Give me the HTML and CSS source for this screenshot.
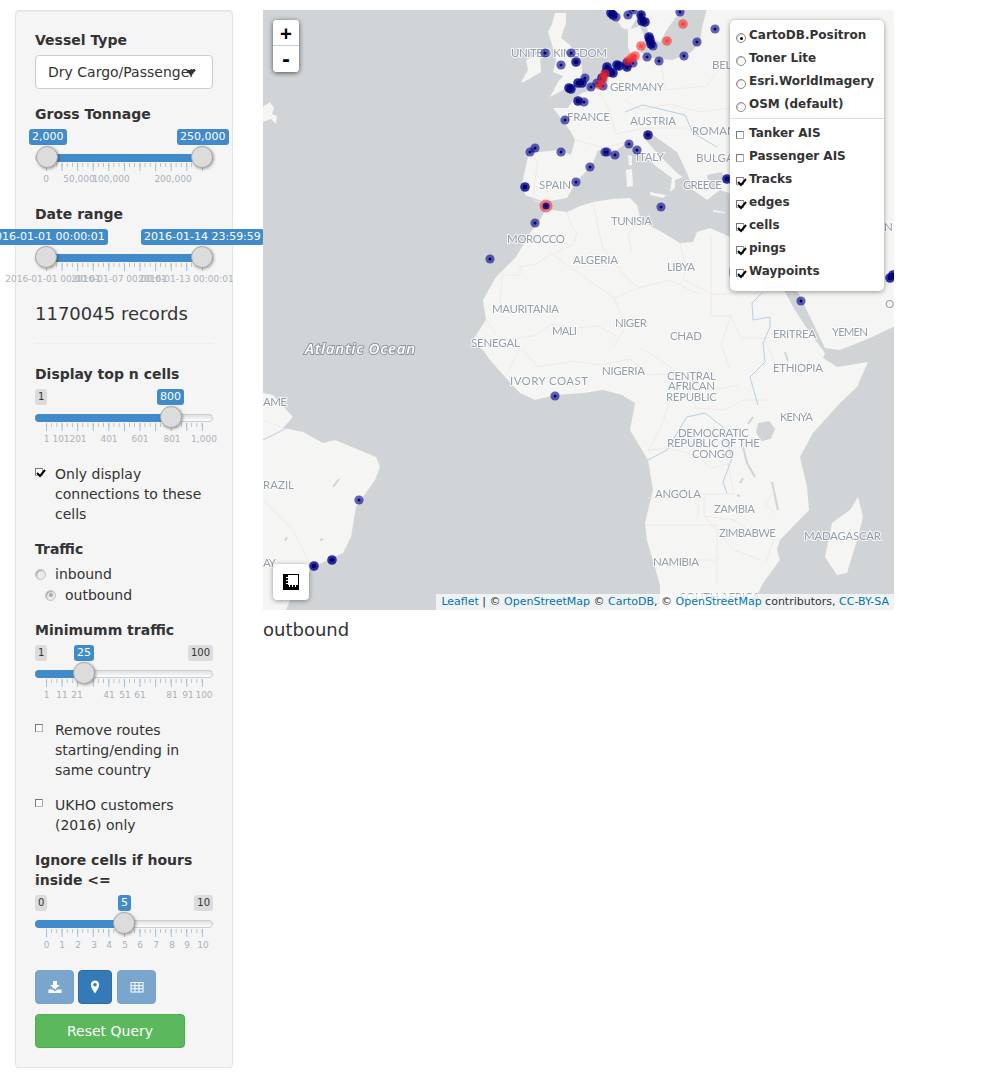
FILE: index.html
```html
<!DOCTYPE html>
<html lang="en">
<head>
<meta charset="utf-8">
<title>Vessel traffic</title>
<link rel="stylesheet" href="styles.css">
</head>
<body>
<div class="page">
<aside class="panel">
  <div class="label">Vessel Type</div>
  <div class="select"><span class="select-text">Dry Cargo/Passenger</span><span class="caret"></span></div>

  <div class="label">Gross Tonnage</div>
  <div class="slider">
    <span class="badge blue" style="left:-6px">2,000</span>
    <span class="badge blue" style="left:142px">250,000</span>
    <div class="track"></div>
    <div class="fill" style="left:12px;width:155px"></div>
    <div class="ticks"></div>
    <span class="handle" style="left:1px"></span>
    <span class="handle" style="left:156px"></span>
    <span class="tick-label" style="left:11px">0</span>
    <span class="tick-label" style="left:44px">50,000</span>
    <span class="tick-label" style="left:76px">100,000</span>
    <span class="tick-label" style="left:138px">200,000</span>
  </div>

  <div class="label">Date range</div>
  <div class="slider">
    <span class="badge blue badge-clip" style="left:-50px">2016-01-01 00:00:01</span>
    <span class="badge blue" style="left:106px">2016-01-14 23:59:59</span>
    <div class="track"></div>
    <div class="fill" style="left:11px;width:156px"></div>
    <div class="ticks"></div>
    <span class="handle" style="left:0"></span>
    <span class="handle" style="left:156px"></span>
    <span class="tick-label" style="left:18px">2016-01-01 00:00:01</span>
    <span class="tick-label" style="left:84px">2016-01-07 00:00:01</span>
    <span class="tick-label" style="left:151px">2016-01-13 00:00:01</span>
  </div>

  <div class="records">1170045 records</div>
  <hr class="rule">

  <div class="label">Display top n cells</div>
  <div class="slider">
    <span class="badge grey" style="left:0">1</span>
    <span class="badge blue" style="left:122px">800</span>
    <div class="track"></div>
    <div class="fill" style="left:0;width:136px"></div>
    <div class="ticks"></div>
    <span class="handle" style="left:125px"></span>
    <span class="tick-label" style="left:11.5px">1</span>
    <span class="tick-label" style="left:26px">101</span>
    <span class="tick-label" style="left:43px">201</span>
    <span class="tick-label" style="left:74px">401</span>
    <span class="tick-label" style="left:105px">601</span>
    <span class="tick-label" style="left:137px">801</span>
    <span class="tick-label" style="left:169px">1,000</span>
  </div>

  <div class="check-row">
    <span class="cb"><svg class="tick-mark" viewBox="0 0 10 9"><path d="M1 4l3 3 5-6" /></svg></span>
    <span>Only display connections to these cells</span>
  </div>

  <div class="label">Traffic</div>
  <div class="radio-row"><span class="rb"></span><span>inbound</span></div>
  <div class="radio-row second"><span class="rb on"></span><span>outbound</span></div>

  <div class="label">Minimumm traffic</div>
  <div class="slider">
    <span class="badge grey" style="left:0">1</span>
    <span class="badge blue" style="left:39px">25</span>
    <span class="badge grey" style="right:0">100</span>
    <div class="track"></div>
    <div class="fill" style="left:0;width:49px"></div>
    <div class="ticks"></div>
    <span class="handle" style="left:38px"></span>
    <span class="tick-label" style="left:11.5px">1</span>
    <span class="tick-label" style="left:27px">11</span>
    <span class="tick-label" style="left:42px">21</span>
    <span class="tick-label" style="left:74px">41</span>
    <span class="tick-label" style="left:90px">51</span>
    <span class="tick-label" style="left:105px">61</span>
    <span class="tick-label" style="left:137px">81</span>
    <span class="tick-label" style="left:153px">91</span>
    <span class="tick-label" style="left:169px">100</span>
  </div>

  <div class="check-row">
    <span class="cb"></span>
    <span>Remove routes starting/ending in same country</span>
  </div>
  <div class="check-row">
    <span class="cb"></span>
    <span>UKHO customers (2016) only</span>
  </div>

  <div class="label">Ignore cells if hours inside &lt;=</div>
  <div class="slider">
    <span class="badge grey" style="left:0">0</span>
    <span class="badge blue" style="left:83px">5</span>
    <span class="badge grey" style="right:0">10</span>
    <div class="track"></div>
    <div class="fill" style="left:0;width:89px"></div>
    <div class="ticks"></div>
    <span class="handle" style="left:78px"></span>
    <span class="tick-label" style="left:11.5px">0</span>
    <span class="tick-label" style="left:27px">1</span>
    <span class="tick-label" style="left:43px">2</span>
    <span class="tick-label" style="left:59px">3</span>
    <span class="tick-label" style="left:74px">4</span>
    <span class="tick-label" style="left:90px">5</span>
    <span class="tick-label" style="left:105px">6</span>
    <span class="tick-label" style="left:121px">7</span>
    <span class="tick-label" style="left:137px">8</span>
    <span class="tick-label" style="left:152px">9</span>
    <span class="tick-label" style="left:168px">10</span>
  </div>

  <div class="btn-row">
    <button class="icon-btn faded wide" aria-label="download">
      <svg class="btn-icon" viewBox="0 0 14 14"><path d="M5 1h4v4h3L7 9.500 2 5h3z"/><path d="M.5 9.500h4L7 11.500l2.500-2h4V13H.5z"/></svg>
    </button>
    <button class="icon-btn" aria-label="map">
      <svg class="btn-icon" viewBox="0 0 14 14"><path fill-rule="evenodd" d="M7 .5a4.200 4.200 0 0 1 4.200 4.200C11.200 7.500 8.500 11 7 13.500 5.500 11 2.800 7.500 2.800 4.700A4.200 4.200 0 0 1 7 .5zM7 2.900a1.800 1.800 0 1 0 0 3.600 1.800 1.800 0 0 0 0-3.600z"/></svg>
    </button>
    <button class="icon-btn faded wide last" aria-label="table">
      <svg class="btn-icon" viewBox="0 0 14 14"><path fill-rule="evenodd" d="M.5 2h13v10.500H.5zM1.500 3v2.200h3V3zm4 0v2.200h3V3zm4 0v2.200h3V3zM1.500 6.200v2.100h3V6.200zm4 0v2.100h3V6.200zm4 0v2.100h3V6.200zM1.500 9.300v2.200h3V9.300zm4 0v2.200h3V9.300zm4 0v2.200h3V9.300z"/></svg>
    </button>
  </div>
  <button class="reset">Reset Query</button>
</aside>

<main class="main">
  <div class="map">
    <svg class="base" viewBox="263 10 631 600" aria-hidden="true">
      <defs>
        <g id="lt"><circle r="4.600" class="d-lt"/><circle r="1.500" class="d-core"/></g>
        <g id="dk"><circle r="4.800" class="d-dk"/><circle r="2.400" class="d-core"/></g>
        <g id="rd"><circle r="4.800" class="d-rd"/><circle r="2" class="d-rd-core"/></g>
        <g id="rb"><circle r="6.500" class="d-rd"/><circle r="3.500" class="d-dk"/><circle r="1.600" class="d-core"/></g>
      </defs>
      <rect x="263" y="10" width="631" height="600" class="sea"/>
      <g class="soft">
      <!-- Africa -->
      <path class="land" d="M546 209L567 212 580 206 593 202 612 199 630 198 637 205 640 217 650 226 660 231 680 243 693 242 697 232 710 228 730 237 750 240 770 236 785 260 784 290 793 307 810 333 825 353 823 358 837 367 868 362 857 387 840 403 813 433 800 457 807 487 809 510 780 540 777 550 780 560 763 583 757 595 750 612 660 612 660 585 647 540 645 523 653 490 648 460 630 430 635 403 622 395 603 390 583 393 555 395 535 400 520 393 505 377 490 360 483 350 471 343 486 320 483 300 496 277 516 257 530 233 540 220z"/>
      <!-- Europe and Asia -->
      <path class="land" d="M529 153L560 150 571 155 575 140 571 132 553 108 568 108 573 100 582 93 597 88 607 78 612 68 627 63 634 60 628 48 628 30 640 26 645 38 640 52 652 58 672 60 690 53 700 43 702 28 707 8 900 8 900 326 893 327 870 338 840 350 825 348 797 290 770 236 745 205 735 195 720 190 707 200 693 190 687 173 677 152 653 135 643 137 657 153 677 173 683 177 675 180 675 188 670 192 672 178 657 167 643 155 637 150 628 142 613 153 598 150 592 165 575 183 567 198 545 202 525 195 522 183z"/>
      <!-- Scandinavia -->
      <path class="land" d="M610 8L622 28 630 30 638 16 645 22 650 38 660 42 668 28 680 12 690 8z"/>
      <!-- Britain and Ireland -->
      <path class="land" d="M555 13L566 13 566 23 561 38 570 45 578 60 582 66 582 78 567 88 550 97 558 82 563 76 553 72 556 60 553 48 548 32 552 24z"/>
      <path class="land" d="M526 60L540 53 541 72 524 82 521 82 528 70z"/>
      <path class="land" d="M263 107L270 102 274 108 272 114 277 116 276 124 271 119 263 122z"/>
      <path class="land" d="M858 497L863 517 858 537 847 573 837 575 825 557 832 523 850 510z"/>
      <path class="land" d="M263 393L273 395 293 417 283 428 303 432 323 443 335 440 376 457 380 467 375 480 356 507 351 537 343 553 313 567 293 593 286 610 263 610z"/>
      <!-- islands and inner seas -->
      <path class="land" d="M628 155l4 1 0 9-3 1zM626 170l6-1 1 17-6 1zM650 192l16 3-3 3-13-3zM713 210l12 2 0 1-12-1z"/>
      <path class="sea" d="M707 175l15-3 4 10-8 2-3 6-6-4z"/>
      <g class="lake">
        <path d="M759 424l10-2 5 7-4 9-8 2-5-8z"/>
        <path d="M743 447l4 16 8 14" fill="none"/>
        <path d="M772 482l3 14 3 14" fill="none"/>
        <path d="M743 478l-3 5M737 495l3 1M785 352l3 9M753 417l-5 7" fill="none"/>
        <path d="M339 479l-6 8M320 540l3-1M287 537l-2 4" fill="none"/>
      </g>
      <g class="border">
        <path d="M567 212l4 14 6 6-3 12-22 10-16 10-16 3 0 8-18 0-2 35"/>
        <path d="M552 254l62 44 24-10 32-8 28 14M614 298l12 28-12 20"/>
        <path d="M593 202l6 30 4 16 18 24 17 16M640 217l-12 18 4 16"/>
        <path d="M680 243l6 26-3 10 28 15 55 0M711 294l0-57"/>
        <path d="M711 294l0 22 20 0 10 22 23 0 12 28 26 6M731 316l-10 28 8 24"/>
        <path d="M486 320l14 20 34-4 18-12 24 4 22-2 18 10"/>
        <path d="M505 377l15-30 18 20 36-6 26 4 30-6 18 16 30-2 30 18 30-6"/>
        <path d="M640 348l18 10 26 20 12 30 28 2 20-10 26 0M670 400l-10 30-12 20 20-2 30 8 12 12 18-4 6 30-36 0 0 24"/>
        <path d="M648 498l56 0 0 18 30 4 14 10 18 0 8 10-8 22M645 525l72 0 0 60M660 560l56 0M775 490l-10 14 10 10M704 516l30 34 26 10"/>
        <path d="M625 100l15 10 30-6 30 8 30-4M600 92l10 20 6 22 30-6 40 0M660 60l6 30 40-4 20-26M575 140l30 8 20-6"/>
        <path d="M528 155l10 6-4 26 0 14 14 2"/>
        <path d="M263 420l20 8M263 500l30 30 20 40"/>
      </g>
      <g class="river">
        <path d="M763 292l-11 11 1 17 17-3 0 10-7 16 2 19-15 15 8 28"/>
        <path d="M648 460l19-10 13-22 7-11 18-4 18 14 9 31-9 24 4 11"/>
        <path d="M625 112l18-7 42 10 8 18 24 14"/>
        <path d="M263 440l20-10 8-6"/>
      </g>
      <g class="map-label">
        <text x="511" y="57" textLength="96">UNITED KINGDOM</text>
        <text x="610" y="91" textLength="54">GERMANY</text>
        <text x="567" y="121" textLength="43">FRANCE</text>
        <text x="630" y="125" textLength="46">AUSTRIA</text>
        <text x="692" y="135" textLength="55">ROMANIA</text>
        <text x="712" y="69" textLength="48">BELARUS</text>
        <text x="636" y="161" textLength="28">ITALY</text>
        <text x="696" y="162" textLength="56">BULGARIA</text>
        <text x="539" y="189" textLength="32">SPAIN</text>
        <text x="683" y="189" textLength="39">GREECE</text>
        <text x="611" y="225" textLength="41">TUNISIA</text>
        <text x="507" y="243" textLength="58">MOROCCO</text>
        <text x="573" y="264" textLength="45">ALGERIA</text>
        <text x="667" y="271" textLength="28">LIBYA</text>
        <text x="728" y="276">E</text>
        <text x="884" y="231">N</text>
        <text x="885" y="308">O</text>
        <text x="492" y="313" textLength="67">MAURITANIA</text>
        <text x="552" y="335" textLength="25">MALI</text>
        <text x="615" y="327" textLength="32">NIGER</text>
        <text x="670" y="340" textLength="32">CHAD</text>
        <text x="471" y="347" textLength="49">SENEGAL</text>
        <text x="602" y="375" textLength="43">NIGERIA</text>
        <text x="510" y="385" textLength="78">IVORY COAST</text>
        <text x="667" y="380" textLength="49">CENTRAL</text>
        <text x="668" y="390" textLength="47">AFRICAN</text>
        <text x="666" y="401" textLength="51">REPUBLIC</text>
        <text x="780" y="421" textLength="33">KENYA</text>
        <text x="773" y="372" textLength="50">ETHIOPIA</text>
        <text x="773" y="338" textLength="43">ERITREA</text>
        <text x="832" y="336" textLength="36">YEMEN</text>
        <text x="678" y="437" textLength="71">DEMOCRATIC</text>
        <text x="667" y="447" textLength="93">REPUBLIC OF THE</text>
        <text x="692" y="458" textLength="42">CONGO</text>
        <text x="655" y="498" textLength="46">ANGOLA</text>
        <text x="714" y="513" textLength="41">ZAMBIA</text>
        <text x="719" y="537" textLength="57">ZIMBABWE</text>
        <text x="653" y="566" textLength="46">NAMIBIA</text>
        <text x="804" y="540" textLength="77">MADAGASCAR</text>
        <text x="680" y="601" textLength="80">SOUTH AFRICA</text>
        <text x="263" y="406" textLength="24">AME</text>
        <text x="263" y="489" textLength="31">RAZIL</text>
        <text x="263" y="567" textLength="13">AY</text>
      </g>
      <text class="ocean" x="305" y="354" textLength="110">Atlantic Ocean</text>
      <g>
        <use href="#lt" x="545" y="53"/><use href="#lt" x="571" y="53"/><use href="#lt" x="561" y="65"/><use href="#dk" x="576" y="62"/>
        <use href="#lt" x="565" y="120"/><use href="#lt" x="530" y="152"/><use href="#lt" x="535" y="148"/><use href="#lt" x="561" y="152"/>
        <use href="#dk" x="525" y="187"/><use href="#lt" x="576" y="182"/><use href="#lt" x="535" y="223"/><use href="#lt" x="490" y="259"/>
        <use href="#lt" x="607" y="152"/><use href="#lt" x="605" y="152"/><use href="#lt" x="615" y="155"/><use href="#lt" x="629" y="144"/><use href="#lt" x="637" y="150"/>
        <use href="#dk" x="648" y="135"/><use href="#lt" x="590" y="167"/><use href="#lt" x="661" y="207"/><use href="#dk" x="727" y="179"/>
        <use href="#lt" x="801" y="301"/><use href="#dk" x="890" y="278"/><use href="#dk" x="893" y="275"/>
        <use href="#lt" x="555" y="396"/><use href="#lt" x="359" y="500"/><use href="#dk" x="332" y="560"/><use href="#dk" x="314" y="566"/>
        <use href="#dk" x="571" y="89"/><use href="#dk" x="569" y="88"/><use href="#dk" x="578" y="83"/><use href="#dk" x="582" y="83"/><use href="#lt" x="585" y="78"/><use href="#lt" x="591" y="87"/><use href="#lt" x="597" y="83"/>
        <use href="#dk" x="578" y="101"/><use href="#lt" x="584" y="102"/>
        <use href="#dk" x="602" y="78"/><use href="#lt" x="603" y="86"/><use href="#dk" x="607" y="67"/><use href="#dk" x="606" y="72"/><use href="#dk" x="610" y="72"/><use href="#dk" x="613" y="73"/>
        <use href="#dk" x="617" y="65"/><use href="#dk" x="619" y="66"/><use href="#dk" x="627" y="67"/><use href="#dk" x="627" y="63"/><use href="#lt" x="633" y="63"/>
        <use href="#lt" x="647" y="57"/><use href="#lt" x="659" y="61"/><use href="#lt" x="684" y="56"/><use href="#lt" x="697" y="42"/><use href="#lt" x="715" y="29"/>
        <use href="#dk" x="649" y="37"/><use href="#dk" x="650" y="40"/><use href="#dk" x="651" y="44"/><use href="#lt" x="653" y="46"/>
        <use href="#dk" x="645" y="22"/><use href="#dk" x="642" y="21"/><use href="#dk" x="641" y="15"/><use href="#lt" x="628" y="15"/><use href="#lt" x="680" y="12"/>
        <use href="#dk" x="611" y="13"/><use href="#dk" x="613" y="15"/><use href="#lt" x="616" y="17"/><use href="#lt" x="633" y="10"/>
        <use href="#rd" x="600" y="85"/><use href="#rd" x="603" y="79"/><use href="#rd" x="605" y="74"/><use href="#rd" x="628" y="61"/><use href="#rd" x="632" y="58"/><use href="#rd" x="635" y="56"/>
        <use href="#rd" x="641" y="46"/><use href="#rd" x="667" y="41"/><use href="#rd" x="683" y="24"/><use href="#rb" x="546" y="206"/>
      </g>
      </g>
    </svg>

    <div class="zoom">
      <button class="zoom-btn">+</button>
      <button class="zoom-btn">-</button>
    </div>

    <div class="layers">
      <div class="layer"><span class="lr on"></span><span>CartoDB.Positron</span></div>
      <div class="layer"><span class="lr"></span><span>Toner Lite</span></div>
      <div class="layer"><span class="lr"></span><span>Esri.WorldImagery</span></div>
      <div class="layer"><span class="lr"></span><span>OSM (default)</span></div>
      <div class="layer-sep"></div>
      <div class="layer"><span class="lc"></span><span>Tanker AIS</span></div>
      <div class="layer"><span class="lc"></span><span>Passenger AIS</span></div>
      <div class="layer"><span class="lc"><svg class="tick-mark" viewBox="0 0 10 9"><path d="M1 4l3 3 5-6"/></svg></span><span>Tracks</span></div>
      <div class="layer"><span class="lc"><svg class="tick-mark" viewBox="0 0 10 9"><path d="M1 4l3 3 5-6"/></svg></span><span>edges</span></div>
      <div class="layer"><span class="lc"><svg class="tick-mark" viewBox="0 0 10 9"><path d="M1 4l3 3 5-6"/></svg></span><span>cells</span></div>
      <div class="layer"><span class="lc"><svg class="tick-mark" viewBox="0 0 10 9"><path d="M1 4l3 3 5-6"/></svg></span><span>pings</span></div>
      <div class="layer"><span class="lc"><svg class="tick-mark" viewBox="0 0 10 9"><path d="M1 4l3 3 5-6"/></svg></span><span>Waypoints</span></div>
    </div>

    <button class="measure" aria-label="measure">
      <svg viewBox="0 0 16 16"><path fill-rule="evenodd" d="M0 0H16V16H0zM5 1V11H15V1z"/><path class="ruler-notch" d="M3 3h2v1H3zM3 6h2v1H3zM3 9h2v1H3zM6 11h1v2H6zM9 11h1v2H9zM12 11h1v2h-1z"/></svg>
    </button>

    <div class="attribution"><a href="#">Leaflet</a> | © <a href="#">OpenStreetMap</a> © <a href="#">CartoDB</a>, © <a href="#">OpenStreetMap</a> contributors, <a href="#">CC-BY-SA</a></div>
  </div>
  <div class="direction">outbound</div>
</main>
</div>
</body>
</html>
```
FILE: styles.css
```css
* { box-sizing: border-box; }
html, body { margin: 0; padding: 0; background: #fff; }
body { font-family: "DejaVu Sans", sans-serif; font-size: 14px; line-height: 20px; color: #333; }
button { font-family: inherit; }

.page { display: flex; align-items: flex-start; gap: 30px; padding: 10px 0 10px 15px; }

/* sidebar */
.panel { width: 218px; flex: none; padding: 19px; background: #f5f5f5; border: 1px solid #e3e3e3; border-radius: 4px; box-shadow: inset 0 1px 1px rgba(0,0,0,.05); }
.label { font-weight: 700; margin-bottom: 5px; }
.select { position: relative; height: 34px; margin-bottom: 15px; padding: 6px 12px; background: #fff; border: 1px solid #ccc; border-radius: 4px; overflow: hidden; white-space: nowrap; }
.select-text { display: block; width: 147px; overflow: hidden; }
.caret { position: absolute; top: 14px; left: 150px; width: 0; height: 0; border-left: 5px solid transparent; border-right: 5px solid transparent; border-top: 6px solid #333; }

.slider { position: relative; height: 60px; margin-bottom: 15px; }
.badge { position: absolute; top: 0; height: 16px; padding: 0 3px; font-size: 11px; line-height: 15px; border-radius: 3px; white-space: nowrap; }
.badge.blue { background: #428bca; color: #fff; }
.badge.grey { background: rgba(0,0,0,.1); color: #333; font-size: 10px; }
.track { position: absolute; top: 25px; left: 0; right: 0; height: 8px; background: linear-gradient(#dfdfdf, #fff); border: 1px solid #ccc; border-radius: 4px; }
.fill { position: absolute; top: 25px; height: 8px; background: #428bca; border-radius: 4px; }
.ticks { position: absolute; top: 34px; left: 11px; width: 158px; height: 8px;
  background-image: linear-gradient(90deg, #9cc2e2 1px, transparent 1px), linear-gradient(90deg, #bbb 1px, transparent 1px);
  background-size: 15.6px 8px, 5.2px 4px; background-repeat: repeat-x; }
.handle { position: absolute; top: 17px; width: 22px; height: 22px; border-radius: 50%; background: #dcdcdc; border: 1px solid #aaa; box-shadow: 1px 1px 3px rgba(0,0,0,.35); }
.tick-label { position: absolute; top: 44px; transform: translateX(-50%); font-size: 9px; line-height: 13px; color: #aab2ba; white-space: nowrap; }

.records { font-size: 18px; line-height: 20px; margin-bottom: 19px; }
.rule { margin: 0 0 20px; border: 0; border-top: 1px solid #eee; }

.check-row { display: flex; gap: 12px; margin-bottom: 15px; }
.cb { position: relative; flex: none; width: 8px; height: 8px; margin-top: 4px; background: #fff; border: 1px solid #777; border-top-width: 1.500px; border-left-width: 1.500px; border-right-color: #aaa; border-bottom-color: #bbb; }
.tick-mark { position: absolute; left: 0; top: 0; width: 10px; height: 9px; fill: none; stroke: #000; stroke-width: 2; }

.radio-row { display: flex; align-items: center; gap: 9px; height: 20px; }
.radio-row.second { margin: 1px 0 15px 10px; }
.rb { position: relative; flex: none; width: 11px; height: 11px; border-radius: 50%; background: #ecebe8; border: 1px solid #c4c2bd; box-shadow: inset 1px 1px 1px #aaa; }
.rb.on::after { content: ""; position: absolute; left: 2.500px; top: 2.500px; width: 4px; height: 4px; border-radius: 50%; background: #aaa; }

.btn-row { display: flex; gap: 4px; margin-bottom: 10px; }
.icon-btn { display: flex; align-items: center; justify-content: center; width: 34px; height: 34px; padding: 0; color: #fff; background: #337ab7; border: 1px solid #2e6da4; border-radius: 4px; }
.icon-btn.wide { width: 39px; }
.icon-btn.last { margin-left: 1px; }
.icon-btn.faded { background: #7aa6cd; border-color: #78a3c9; }
.btn-icon { width: 14px; height: 14px; fill: #fff; }
.reset { display: block; width: 150px; height: 34px; padding: 0; font-size: 14px; color: #fff; background: #5cb85c; border: 1px solid #4cae4c; border-radius: 4px; }

/* map */
.main { flex: none; width: 631px; }
.map { position: relative; width: 631px; height: 600px; overflow: hidden; background: #d1d4d7; }
.base { display: block; width: 631px; height: 600px; }
.soft { filter: blur(.35px); }
.sea { fill: #d1d4d7; }
.land { fill: #f5f5f3; }
.lake path { stroke: #d1d4d7; stroke-width: 2; fill: #d1d4d7; }
.lake path[fill="none"] { fill: none; }
.border path { fill: none; stroke: #f0e5e5; stroke-width: .8; }
.river path { fill: none; stroke: #b6d0e6; stroke-width: 1; }
.map-label text { font-family: Lato, "Noto Sans", sans-serif; font-size: 11.5px; fill: #939eaa; stroke: #fff; stroke-opacity: .75; stroke-width: 2px; paint-order: stroke; }
.ocean { font-family: "Open Sans", sans-serif; font-style: italic; font-weight: 600; font-size: 15px; fill: #fff; stroke: #8f979e; stroke-width: 2px; paint-order: stroke; }
.d-lt { fill: #00008b; fill-opacity: .6; }
.d-dk { fill: #00008b; fill-opacity: .8; }
.d-core { fill: #00006e; }
.d-rd { fill: #ff2a2a; fill-opacity: .6; }
.d-rd-core { fill: #ff2222; fill-opacity: .55; }

.zoom { position: absolute; left: 10px; top: 10px; width: 26px; border-radius: 4px; background: #fff; box-shadow: 0 1px 5px rgba(0,0,0,.65); overflow: hidden; }
.zoom-btn { display: block; width: 26px; height: 26px; padding: 0; font: 700 19px/26px "DejaVu Sans Mono", monospace; color: #000; background: #fff; border: 0; border-bottom: 1px solid #ccc; }
.zoom-btn:last-child { border-bottom: 0; }

.layers { position: absolute; left: 467px; top: 10px; width: 154px; height: 271px; padding: 3px 0 0; background: #fff; border-radius: 5px; box-shadow: 0 1px 5px rgba(0,0,0,.4); font-size: 12px; font-weight: 700; }
.layer { display: flex; align-items: center; gap: 3px; height: 23px; padding-left: 6px; line-height: 14px; }
.lr { flex: none; width: 10px; height: 10px; margin-top: 7px; position: relative; border-radius: 50%; background: #fff; border: 1px solid #8a8a8a; box-shadow: inset 1px 1px 1px rgba(0,0,0,.2); }
.lr.on::after { content: ""; position: absolute; left: 2.500px; top: 2.500px; width: 3px; height: 3px; border-radius: 50%; background: #000; }
.lc { position: relative; flex: none; width: 8px; height: 8px; margin: 5px 2px 0 0; background: #fff; border: 1px solid #777; border-top-width: 1.500px; border-left-width: 1.500px; border-right-color: #aaa; border-bottom-color: #aaa; }
.layer-sep { height: 1px; margin: 3px 0 2px; background: #ddd; }

.measure { position: absolute; left: 10px; top: 554px; display: flex; align-items: center; justify-content: center; width: 36px; height: 36px; padding: 0; background: #fff; border: 0; border-radius: 4px; box-shadow: 0 1px 5px rgba(0,0,0,.4); }
.measure svg { display: block; width: 16px; height: 16px; fill: #000; }
.ruler-notch { fill: #fff; }

.attribution { position: absolute; right: 0; bottom: 0; height: 16px; padding: 0 5px; font-size: 11px; line-height: 16px; color: #333; background: rgba(255,255,255,.7); white-space: nowrap; }
.attribution a { color: #0078a8; text-decoration: none; }

.direction { margin-top: 10px; font-size: 18px; line-height: 20px; }
```
